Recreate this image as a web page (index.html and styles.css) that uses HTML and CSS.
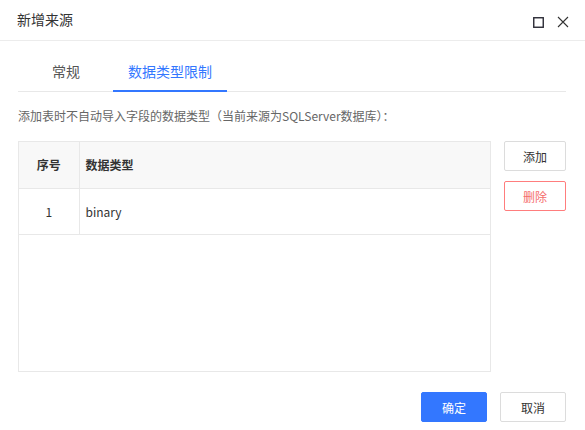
FILE: index.html
```html
<!DOCTYPE html>
<html lang="zh-CN">
<head>
<meta charset="utf-8">
<title>新增来源</title>
<link rel="stylesheet" href="styles.css">
</head>
<body>
<div class="dialog">
  <div class="dialog-header">
    <div class="dialog-title">新增来源</div>
    <div class="dialog-tools">
      <svg class="tool-icon" width="13" height="13" viewBox="0 0 13 13"><rect x="1.75" y="1.75" width="9.5" height="9.5" fill="none" stroke="#2a2a35" stroke-width="1.4"/></svg>
      <svg class="tool-icon" width="12" height="12" viewBox="0 0 12 12"><path d="M1 1 L11 11 M11 1 L1 11" stroke="#333" stroke-width="1.1" fill="none"/></svg>
    </div>
  </div>

  <div class="tabs">
    <div class="tab">常规</div>
    <div class="tab active">数据类型限制</div>
  </div>

  <div class="content">
    <p class="hint">添加表时不自动导入字段的数据类型（当前来源为SQLServer数据库）：</p>
    <div class="grid-area">
      <div class="table-box">
        <table class="type-table">
          <thead>
            <tr><th class="col-no">序号</th><th class="col-type">数据类型</th></tr>
          </thead>
          <tbody>
            <tr><td class="col-no">1</td><td class="col-type">binary</td></tr>
          </tbody>
        </table>
      </div>
      <div class="side-actions">
        <button class="btn">添加</button>
        <button class="btn btn-danger">删除</button>
      </div>
    </div>
  </div>

  <div class="dialog-footer">
    <button class="btn btn-primary wide">确定</button>
    <button class="btn wide">取消</button>
  </div>
</div>
</body>
</html>
```

FILE: styles.css
```css
* {
  box-sizing: border-box;
}

html, body {
  margin: 0;
  padding: 0;
  background: #fff;
}

body {
  font-family: "Noto Sans CJK SC", "Noto Sans", "Liberation Sans", sans-serif;
  color: #333;
}

.dialog {
  width: 585px;
  height: 430px;
  background: #fff;
}

/* header bar */
.dialog-header {
  display: flex;
  justify-content: space-between;
  height: 41px;
  border-bottom: 1px solid #ececec;
  padding: 0 16px 0 17px;
}

.dialog-title {
  font-size: 14px;
  line-height: 20px;
  padding-top: 9px;
  color: #333;
}

.dialog-tools {
  display: flex;
  gap: 12px;
  padding-top: 16px;
}

.tool-icon {
  display: block;
}

/* tabs */
.tabs {
  display: flex;
  gap: 18px;
  margin: 0 19px 0 18px;
  padding-left: 19px;
  border-bottom: 1px solid #e8e8e8;
}

.tab {
  height: 51px;
  margin-bottom: -1px;
  padding: 20px 15px 0;
  font-size: 14px;
  line-height: 20px;
  color: #555;
  border-bottom: 2px solid transparent;
}

.tab.active {
  color: #3377ff;
  border-bottom-color: #3377ff;
}

/* content */
.content {
  padding: 0 19px 0 18px;
}

.hint {
  margin: 15px 0 16px;
  font-size: 12px;
  line-height: 18px;
  color: #666;
}

.grid-area {
  display: flex;
  gap: 13px;
}

.table-box {
  width: 473px;
  height: 231px;
  border: 1px solid #e8e8e8;
}

.type-table {
  width: 100%;
  border-collapse: collapse;
  font-size: 12px;
}

.type-table th,
.type-table td {
  height: 46px;
  padding: 0;
  border-bottom: 1px solid #e8e8e8;
  color: #333;
}

.type-table th {
  background: #f8f8f8;
  font-weight: bold;
}

.type-table .col-no {
  width: 60px;
  text-align: center;
  border-right: 1px solid #e8e8e8;
}

.type-table .col-type {
  text-align: left;
  padding-left: 6px;
}

.side-actions {
  display: flex;
  flex-direction: column;
  gap: 10px;
}

/* buttons */
.btn {
  width: 62px;
  height: 30px;
  padding: 0;
  font-family: inherit;
  font-size: 12px;
  color: #333;
  background: #fff;
  border: 1px solid #dcdcdc;
  border-radius: 2px;
}

.btn-danger {
  color: #f56c6c;
  border-color: #ff7d7d;
}

.btn-primary {
  color: #fff;
  background: #3377ff;
  border-color: #3377ff;
}

.btn.wide {
  width: 66px;
}

.dialog-footer {
  display: flex;
  justify-content: flex-end;
  gap: 13px;
  padding: 20px 19px 0 0;
}
```
